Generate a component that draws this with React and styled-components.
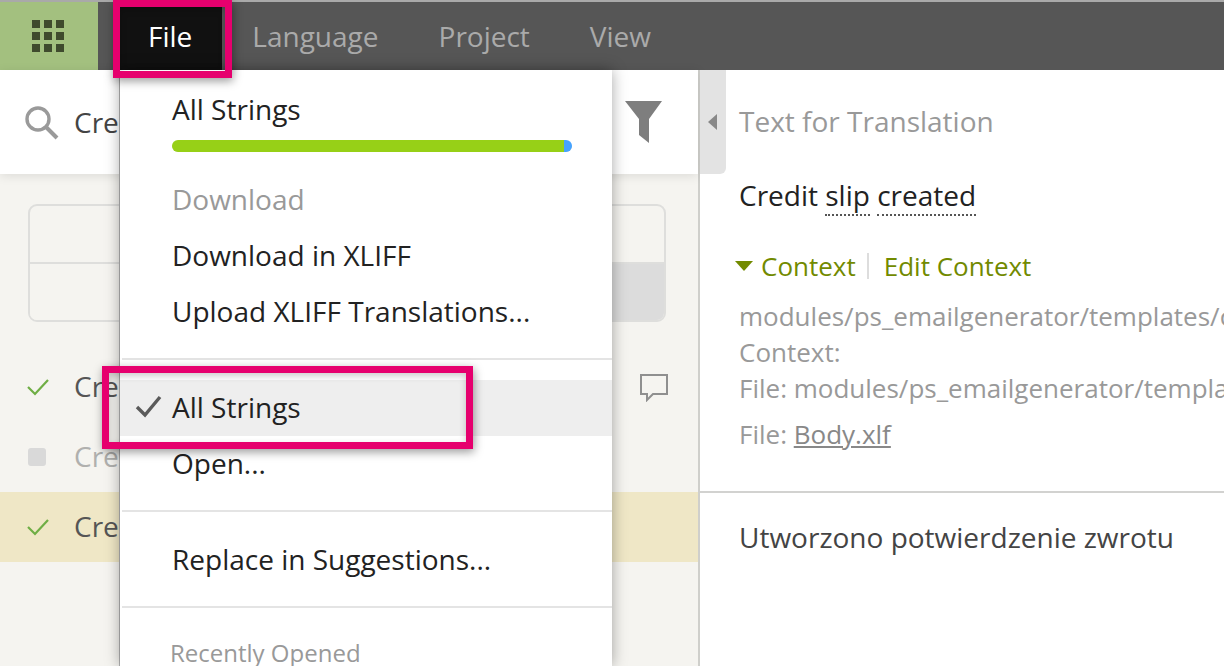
import React from 'react';
import styled, { createGlobalStyle } from 'styled-components';

const GlobalStyle = createGlobalStyle`
  html, body {
    margin: 0;
    height: 100%;
    overflow: hidden;
    background: #fff;
  }
  body {
    font-family: "Open Sans", "Liberation Sans", sans-serif;
  }
`;

const Page = styled.div`
  position: relative;
  width: 1224px;
  height: 666px;
  overflow: hidden;
  display: flex;
  flex-direction: column;
`;

const TopBar = styled.header`
  height: 68px;
  flex: none;
  display: flex;
  align-items: stretch;
  background: #565656;
  border-top: 2px solid #a9a9a9;
`;

const AppsButton = styled.div`
  width: 98px;
  background: #a3c07f;
  display: flex;
  align-items: center;
  justify-content: center;
`;

const AppsGrid = styled.div`
  display: grid;
  grid-template-columns: repeat(3, 8px);
  grid-auto-rows: 8px;
  gap: 4px;
  margin-left: -2px;
  span {
    background: #3f4a2d;
  }
`;

const TopMenu = styled.nav`
  display: flex;
  margin-left: 22px;
`;

const TopItem = styled.div`
  padding: ${(props) => (props.$active ? '0 30px 0 28px' : '0 30px')};
  display: flex;
  align-items: center;
  font-size: 28px;
  color: ${(props) => (props.$active ? '#fff' : '#aaa')};
  background: ${(props) => (props.$active ? '#111' : 'transparent')};
`;

const Main = styled.main`
  flex: 1;
  display: flex;
  min-height: 0;
`;

const LeftPanel = styled.section`
  width: 698px;
  flex: none;
  background: #f5f4f0;
  border-right: 2px solid #cfcfcb;
`;

const SearchBar = styled.div`
  height: 104px;
  background: #fff;
  display: flex;
  align-items: center;
  justify-content: space-between;
  padding: 0 35px 0 23px;
  box-shadow: 0 2px 10px rgba(0, 0, 0, 0.1);
`;

const SearchLeft = styled.div`
  display: flex;
  align-items: center;
  gap: 15px;
  font-size: 28px;
  color: #444;
`;

const StatsBox = styled.div`
  margin: 30px 32px 0 28px;
  height: 114px;
  border: 2px solid #dededc;
  border-radius: 9px;
  display: grid;
  grid-template-rows: 58px 1fr;
  overflow: hidden;
`;

const StatsTop = styled.div`
  border-bottom: 2px solid #dededc;
`;

const StatsBottom = styled.div`
  background: linear-gradient(to right, #f5f4f0 0, #f5f4f0 66%, #dcdcdc 66%);
`;

const UnitList = styled.div`
  margin-top: 30px;
`;

const UnitRow = styled.div`
  height: 70px;
  display: flex;
  align-items: center;
  padding: 0 30px 0 26px;
  font-size: 28px;
  color: ${(props) => (props.$muted ? '#b0b0ae' : '#555')};
  background: ${(props) => (props.$selected ? '#efe7c6' : 'transparent')};
`;

const StatusSlot = styled.div`
  width: 48px;
  flex: none;
  display: flex;
  align-items: center;
`;

const StatusSquare = styled.span`
  width: 18px;
  height: 18px;
  margin-left: 2px;
  border-radius: 3px;
  background: #d9d9d9;
`;

const RowText = styled.span`
  flex: 1;
  margin-top: -2px;
`;

const RightPanel = styled.section`
  flex: 1;
  position: relative;
  min-width: 0;
  overflow: hidden;
  background: #fff;
`;

const PaneToggle = styled.div`
  position: absolute;
  left: 0;
  top: 0;
  width: 26px;
  height: 104px;
  background: #e3e3e3;
  border-bottom-right-radius: 6px;
  display: flex;
  align-items: center;
  padding-left: 8px;
  box-sizing: border-box;
  &::before {
    content: '';
    border-style: solid;
    border-width: 8px 9px 8px 0;
    border-color: transparent #888 transparent transparent;
  }
`;

const SourceBlock = styled.div`
  height: 423px;
  box-sizing: border-box;
  padding: 29px 0 0 39px;
  border-bottom: 2px solid #d2d2d0;
  white-space: nowrap;
  overflow: hidden;
`;

const PaneTitle = styled.div`
  font-size: 28px;
  line-height: 44px;
  color: #999;
`;

const SourceText = styled.div`
  margin-top: 34px;
  font-size: 28px;
  line-height: 36px;
  color: #222;
`;

const Term = styled.span`
  border-bottom: 2px dotted #555;
`;

const ContextRow = styled.div`
  margin-top: 34px;
  display: flex;
  align-items: center;
  font-size: 26px;
  line-height: 38px;
  color: #728a00;
`;

const ContextCaret = styled.span`
  width: 0;
  height: 0;
  margin: 0 8px 0 -4px;
  border-style: solid;
  border-width: 10px 9px 0 9px;
  border-color: #728a00 transparent transparent transparent;
`;

const Pipe = styled.span`
  width: 2px;
  height: 26px;
  margin: 0 15px 0 11px;
  background: #ddd;
`;

const ContextInfo = styled.div`
  margin-top: 13px;
  font-size: 26px;
  line-height: 36px;
  color: #999;
`;

const FileLine = styled.div`
  margin-top: 10px;
  font-size: 26px;
  line-height: 36px;
  color: #999;
  u {
    color: #888;
  }
`;

const TargetBlock = styled.div`
  padding: 26px 0 0 39px;
  font-size: 28px;
  line-height: 36px;
  color: #444;
  white-space: nowrap;
`;

const Dropdown = styled.div`
  position: absolute;
  left: 120px;
  top: 70px;
  width: 492px;
  height: 596px;
  background: #fff;
  box-shadow: 0 0 14px rgba(0, 0, 0, 0.35), -1px 0 0 #b5b5b5;
  padding-top: 12px;
  box-sizing: border-box;
`;

const MenuItem = styled.div`
  position: relative;
  height: 56px;
  box-sizing: border-box;
  padding: 0 0 2px 52px;
  display: flex;
  align-items: center;
  font-size: 28px;
  color: ${(props) => (props.$disabled ? '#999' : '#222')};
  background: ${(props) => (props.$checked ? '#eee' : 'transparent')};
  white-space: nowrap;
`;

const Progress = styled.div`
  width: 400px;
  height: 12px;
  margin: 2px 0 20px 52px;
  border-radius: 6px;
  overflow: hidden;
  display: flex;
  box-shadow: inset 0 -3px 0 rgba(0, 0, 0, 0.16);
`;

const ProgressPart = styled.span`
  background: ${(props) => props.$color};
  flex: ${(props) => props.$grow};
`;

const MenuSeparator = styled.div`
  height: 2px;
  margin: ${(props) => props.$before}px 0 ${(props) => props.$after}px 2px;
  background: #e4e4e4;
`;

const CheckMark = styled.svg`
  position: absolute;
  left: 15px;
  top: 15px;
`;

const RecentTitle = styled.div`
  padding: 29px 0 0 50px;
  font-size: 24px;
  line-height: 32px;
  color: #999;
`;

const Callout = styled.div`
  position: absolute;
  left: ${(props) => props.$left}px;
  top: ${(props) => props.$top}px;
  width: ${(props) => props.$width}px;
  height: ${(props) => props.$height}px;
  box-sizing: border-box;
  border: 7px solid #e6006e;
  box-shadow: 1px 3px 9px rgba(0, 0, 0, 0.4), inset 0 3px 7px rgba(0, 0, 0, 0.2);
  pointer-events: none;
`;

const SearchIcon = () => (
  <svg width="36" height="36" viewBox="0 0 36 36" fill="none" stroke="#9a9a9a">
    <circle cx="15" cy="15" r="11" strokeWidth="3.4" />
    <path d="M23 23 L34 34" strokeWidth="4" />
  </svg>
);

const FilterIcon = () => (
  <svg width="38" height="42" viewBox="0 0 38 42">
    <path d="M0 0 H37 L24 18 V42 L14 34 V18 Z" fill="#7e7e7e" />
  </svg>
);

const GreenCheck = () => (
  <svg width="24" height="18" viewBox="0 0 24 18" fill="none" stroke="#6fae45" strokeWidth="2.2">
    <path d="M2 9 L9 16 L22 2" />
  </svg>
);

const CommentIcon = () => (
  <svg width="28" height="29" viewBox="0 0 28 29" fill="none" stroke="#8f8f8f" strokeWidth="2">
    <path d="M1 2 H27 V21 H13 L7 27 V21 H1 Z" />
  </svg>
);

const App = () => (
  <Page>
    <GlobalStyle />
    <TopBar>
      <AppsButton>
        <AppsGrid>
          {Array.from({ length: 9 }, (_, i) => (
            <span key={i} />
          ))}
        </AppsGrid>
      </AppsButton>
      <TopMenu>
        <TopItem $active>File</TopItem>
        <TopItem>Language</TopItem>
        <TopItem>Project</TopItem>
        <TopItem>View</TopItem>
      </TopMenu>
    </TopBar>
    <Main>
      <LeftPanel>
        <SearchBar>
          <SearchLeft>
            <SearchIcon />
            <span>Credit</span>
          </SearchLeft>
          <FilterIcon />
        </SearchBar>
        <StatsBox>
          <StatsTop />
          <StatsBottom />
        </StatsBox>
        <UnitList>
          <UnitRow>
            <StatusSlot><GreenCheck /></StatusSlot>
            <RowText>Credit slip created</RowText>
            <CommentIcon />
          </UnitRow>
          <UnitRow $muted>
            <StatusSlot><StatusSquare /></StatusSlot>
            <RowText>Credit slip</RowText>
          </UnitRow>
          <UnitRow $selected>
            <StatusSlot><GreenCheck /></StatusSlot>
            <RowText>Credit slip created</RowText>
          </UnitRow>
        </UnitList>
      </LeftPanel>
      <RightPanel>
        <PaneToggle />
        <SourceBlock>
          <PaneTitle>Text for Translation</PaneTitle>
          <SourceText>
            Credit <Term>slip</Term> <Term>created</Term>
          </SourceText>
          <ContextRow>
            <ContextCaret />
            Context
            <Pipe />
            Edit Context
          </ContextRow>
          <ContextInfo>
            modules/ps_emailgenerator/templates/core
            <br />
            Context:
            <br />
            File: modules/ps_emailgenerator/templates/core
          </ContextInfo>
          <FileLine>
            File: <u>Body.xlf</u>
          </FileLine>
        </SourceBlock>
        <TargetBlock>Utworzono potwierdzenie zwrotu</TargetBlock>
      </RightPanel>
    </Main>
    <Dropdown>
      <MenuItem>All Strings</MenuItem>
      <Progress>
        <ProgressPart $color="#97d017" $grow={98} />
        <ProgressPart $color="#45a3ff" $grow={2} />
      </Progress>
      <MenuItem $disabled>Download</MenuItem>
      <MenuItem>Download in XLIFF</MenuItem>
      <MenuItem>Upload XLIFF Translations...</MenuItem>
      <MenuSeparator $before={18} $after={20} />
      <MenuItem $checked>
        <CheckMark width="28" height="24" viewBox="0 0 28 24" fill="none" stroke="#5a5a5a" strokeWidth="3.4">
          <path d="M2 12 L10 20 L25 2" />
        </CheckMark>
        All Strings
      </MenuItem>
      <MenuItem>Open...</MenuItem>
      <MenuSeparator $before={18} $after={20} />
      <MenuItem>Replace in Suggestions...</MenuItem>
      <MenuSeparator $before={18} $after={0} />
      <RecentTitle>Recently Opened</RecentTitle>
    </Dropdown>
    <Callout $left={113} $top={0} $width={119} $height={78} />
    <Callout $left={102} $top={366} $width={371} $height={83} />
  </Page>
);

export default App;
